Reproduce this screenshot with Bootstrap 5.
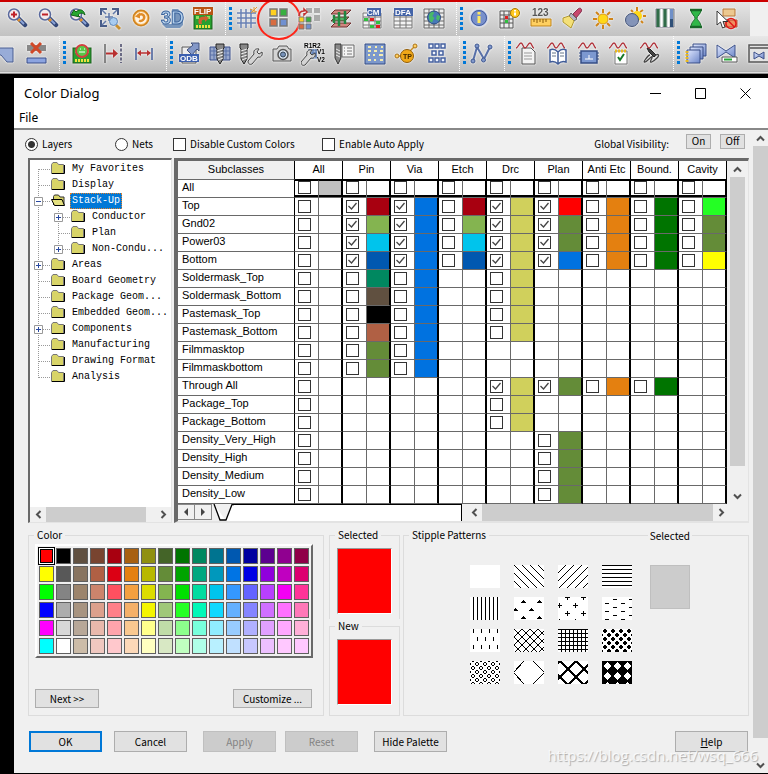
<!DOCTYPE html>
<html lang="en">
<head>
<meta charset="utf-8">
<meta name="viewport" content="width=device-width, initial-scale=1">
<title>Color Dialog</title>
<link rel="stylesheet" href="https://cdn.jsdelivr.net/npm/bootstrap@5.3.0/dist/css/bootstrap.min.css">
<style>
body{background:#000;color:#000;font:10px/16px "Noto Sans CJK SC","Liberation Sans",sans-serif}
button{font:inherit;color:inherit}
/* toolbars */
.tools{border-top:2px solid #c00;background:#f0f0f0;overflow:hidden}
.toolrow{height:34px;background:linear-gradient(#e6e6e6,#c2c2c2)}
.toolrow.first{margin-right:18px}
.toolrow.second{height:35px;background:linear-gradient(#e8e8e8,#bcbcbc)}
.toolrow.second>button:first-child{margin-left:-10px}
.toolrow.first>button:first-child{margin-left:1px}
.toolrow>button{flex:0 0 31px;height:30px;padding:0;border:0;background:none;display:grid;place-items:center}
.toolrow svg{width:24px;height:24px;filter:drop-shadow(0 0 1px #fff)}
.toolrow svg text{font-family:"Liberation Sans",sans-serif;font-weight:700}
.grip{flex:0 0 14px;height:100%;background:
 repeating-linear-gradient(#0078d7 0 3px,transparent 3px 5px) 11px 5px/3px 23px no-repeat,
 repeating-linear-gradient(#fff 0 1px,transparent 1px 2px) 7px 0/1px 100% no-repeat}
.toolbase{height:3px;background:linear-gradient(#999,#e0e0e0 50%,#666)}
.ring{position:absolute;left:-6px;top:-6px;width:44px;height:42px;border:2px solid #ff2418;border-radius:50%;pointer-events:none}
/* window */
.dlg{margin:4px 0 1px 14px;background:#f0f0f0}
.titlebar{background:#fff;height:31px;padding:0 17px 0 10px;font:13px/31px "Noto Sans",sans-serif}
.titlebar button{border:0;background:none;padding:0;line-height:0}
.winbtns{gap:34px}
.menubar{background:#fff;height:21px;padding-left:5px;border-bottom:2px solid #888;font:12px/18px "Noto Sans",sans-serif}
.menubar a{color:#000}
.opts input,.chk{appearance:none;flex:0 0 13px;width:13px;height:13px;border:1px solid #333;background:#fff;margin:0}
.opts input[type=radio]{border-radius:50%}
.opts input[type=radio]:checked{background:radial-gradient(#333 0 3px,#fff 4px)}
.chk:checked{background:#fff url("data:image/svg+xml,%3Csvg xmlns='http://www.w3.org/2000/svg' viewBox='0 0 11 11'%3E%3Cpath d='M1.500 5l3 3 5-6' fill='none' stroke='%23444' stroke-width='1.300'/%3E%3C/svg%3E")}
.o1{width:90px}.o2{width:58px}.o3{width:149px}
.push{border:1px solid #adadad;background:#e1e1e1;border-radius:0;padding:0;height:21px;line-height:18px;text-align:center}
.push:disabled{background:#ccc;border-color:#bfbfbf;color:#838383}
.push.main{border:2px solid #0078d7;line-height:16px}
.push.short{height:19px;line-height:16px}
.tiny{width:25px;height:15px;line-height:12px}
.w73{width:73px}.w64{width:64px}.w79{width:79px}
#pane{min-width:0;padding-left:14px}
.opts{height:28px;margin-left:-3px;padding-right:4px}
.vis1{margin:-6px 9px 0 17px}
.vis2{margin-top:-6px}
.panels{gap:2px}
/* scroll bars */
.sb{background:#f0f0f0;flex:none}
.sb button{flex:0 0 16px;display:grid;place-items:center;border:0;background:none;padding:0}
.sb svg{width:9px;height:9px;fill:none;stroke:#505050;stroke-width:2}
.thumb{background:#cdcdcd}
.upright{width:15px}
.inner{margin-left:3px}
.level{height:15px}
.twide{flex:0 0 100px}
.ttall{flex:0 0 289px}
.rest{height:19px}
/* tree */
.tree{width:144px;background:#fff;border:1px solid #696969;border-width:2px 1px 1px 2px;border-right-color:#e3e3e3;border-bottom-color:#e3e3e3;font:10px/16px "Liberation Mono",monospace}
.tree ul{padding-top:1px!important}
.tree li{height:16px}
.tree b{font-weight:400;margin-left:5px;padding:0 2px;white-space:nowrap}
.tree b.on{background:#0078d7;color:#fff;outline:1px dotted #e0802c;outline-offset:-1px}
.gut{flex:0 0 20px;height:16px;display:flex;padding:4px 0 0 4px;background:
 repeating-linear-gradient(#999 0 1px,transparent 1px 2px) 8px 0/1px 100% no-repeat,
 repeating-linear-gradient(90deg,#999 0 1px,transparent 1px 2px) 9px 8px/11px 1px no-repeat}
.gut.bar{background-size:1px 100%,0 0}
.gut.top1{background-position:8px 8px,9px 8px}
.gut.end{background-size:1px 9px,11px 1px}
.gut svg{width:9px;height:9px}
.fold{flex:0 0 14px;width:14px;height:12px;margin:1px 0 0 1px}
/* layer grid */
.gridbox{min-width:0;padding-right:3px;border-style:solid;border-width:3px 1px 2px 4px;border-color:#696969 #e3e3e3 #e3e3e3 #696969}
.lay{width:100%;table-layout:fixed;border-collapse:separate;border-spacing:0;background:#fff;font:11px/14px "Liberation Sans",sans-serif}
.lay th,.lay td{padding:0;overflow:hidden;font-weight:400;white-space:nowrap;border-bottom:1px solid #696969;height:18px;vertical-align:top}
.lay thead th{height:19px;text-align:center;border-right:1px solid #000;border-bottom-color:#000;line-height:17px}
.lay thead th:first-child{background:#f0f0f0;border-bottom-color:#696969}
.lay tbody th{padding-left:4px;border-right:1px solid #000}
.lay td.t{padding:2px 0 0 3px;border-right:1px solid #696969}
.lay td.c{border-right:2px solid #000}
.lay .chk{display:block}
.lay tr.every td{border-top:1px solid #000;box-shadow:inset 0 -2px #000}
.lay tr.every td.t{padding-top:0}
.name{width:117px}
.tabs{height:17px;background:#f0f0f0}
.tabs .step{flex:0 0 17px;height:16px;border:1px solid #888;border-width:1px 1px 1px 0;background:#f0f0f0;padding:0;line-height:0}
.sheet{flex:0 1 228px;background:#fff;border-top:1px solid #000;border-right:1px solid #000}
/* lower part */
.groups{margin-top:5px}
.grp{border:1px solid #dcdcdc;min-width:0}
.grp legend{float:none;width:auto;font-size:10px;line-height:14px;margin:0 0 0 5px;padding:0 3px}
.gcolor{flex:0 0 296px;margin:0 5px 0 0;padding:0 6px 7px}
.gcolor legend{margin-left:-1px}
.pal{border:2px solid;border-color:#fff #696969 #696969 #fff;padding:2px;display:grid;grid-template-columns:repeat(16,15px);gap:2px;width:278px;margin-top:2px}
.sw{width:15px;height:16px;border:1px solid #606060;padding:0}
.sw.cur{outline:1px solid #000;box-shadow:0 0 0 1px #000,inset 0 0 0 1px #000;border-color:#fff}
.acts{margin:31px 5px 0 0}
.gsel{flex:0 0 71px;margin-right:3px}
.big{height:66px;background:red;border:1px solid;border-color:#999 #fff #fff #999;margin:6px 7px 5px}
.gstip{padding-top:23px}
.stip{display:grid;grid-template-columns:repeat(4,30px);gap:9px 14px;margin-left:66px}
.stip button{height:23px;padding:0;border:0;background:#fff;line-height:0}
.stip svg{width:30px;height:23px;shape-rendering:crispEdges;fill:none;stroke:#000}
.none{width:40px;height:44px;border:1px solid #bfbfbf;background:#ccc;margin-left:18px}
.over{position:absolute;right:56px;top:-13px;padding:0 2px;background:#f0f0f0;line-height:14px}
.foot{margin:15px 0 0 1px}
.foot>:nth-child(2){margin-left:12px}
.foot>:nth-child(3){margin-left:16px}
.foot>:nth-child(4){margin-left:9px}
.foot>:nth-child(5){margin-left:16px}
.foot>:last-child{margin-right:1px}
.wm{position:absolute;right:10px;bottom:8px;font:15px/20px "Open Sans",sans-serif;color:#fffc;text-shadow:1px 1px 1px #aaa;pointer-events:none}
</style>
<script src="https://cdn.jsdelivr.net/npm/bootstrap@5.3.0/dist/js/bootstrap.bundle.min.js"></script>
</head>
<body class="d-flex flex-column min-vh-100 m-0">
<svg width="0" height="0" class="position-absolute" aria-hidden="true">
 <defs>
  <linearGradient id="blue" x2="1" y2="1"><stop stop-color="#e0e8ff"/><stop offset="1" stop-color="#6c86c8"/></linearGradient>
  <symbol id="fo" viewBox="0 0 14 12"><path d="M.5 11.500V2.500l1.500-2h4l1.500 2h5v9z" fill="#d8d468" stroke="#777"/><path d="M1 11.500h12.500V3" fill="none" stroke="#000"/></symbol>
  <symbol id="fopen" viewBox="0 0 14 12"><path d="M2.500 11V2.500l1-1.500h4l1.500 2h4v8" fill="#d8d468" stroke="#333"/><path d="M.5 5.500h10.500l2.500 6H3.500z" fill="#e4e080" stroke="#000"/></symbol>
  <symbol id="plus" viewBox="0 0 9 9"><path d="M.5.5h8v8h-8z" fill="#fff" stroke="#999"/><path d="M2 4.500h5M4.500 2v5" stroke="#2848a0"/></symbol>
  <symbol id="minus" viewBox="0 0 9 9"><path d="M.5.5h8v8h-8z" fill="#fff" stroke="#999"/><path d="M2 4.500h5" stroke="#2848a0"/></symbol>
  <symbol id="up" viewBox="0 0 9 9"><path d="M1 6.500l3.500-3.500L8 6.500"/></symbol>
  <symbol id="dn" viewBox="0 0 9 9"><path d="M1 2.500L4.500 6 8 2.500"/></symbol>
  <symbol id="lt" viewBox="0 0 9 9"><path d="M6.500 1L3 4.500 6.500 8"/></symbol>
  <symbol id="rt" viewBox="0 0 9 9"><path d="M2.500 1L6 4.500 2.500 8"/></symbol>
  <symbol id="lens" viewBox="0 0 24 24"><path d="M13 11l7 7" stroke="#344878" stroke-width="4.500" stroke-linecap="round"/><path d="M13 11l6 6" stroke="#8ca4d8" stroke-width="2"/><path d="M13 12l2 2" stroke="#e09030" stroke-width="3"/><circle cx="9" cy="7.500" r="5.500" fill="#f4e8ea" stroke="#58689c" stroke-width="1.500"/></symbol>
  <symbol id="board" viewBox="0 0 24 24"><rect x="3" y="6" width="18" height="15" fill="#28a030" stroke="#185c18"/><path d="M5 18.500h14" stroke="#f0e040" stroke-width="3" stroke-dasharray="2 1"/><path d="M5 8h3v3H5zM16 8h3v3h-3z" fill="#90e060"/></symbol>
  <symbol id="wave" viewBox="0 0 24 24"><path d="M1 7c2 0 3-5 5-5s2 5 4 5 3-5 5-5 2 5 4 5" fill="none" stroke="#b03038" stroke-width="1.300"/></symbol>
  <symbol id="wrench" viewBox="0 0 24 24"><path d="M12 21l6-7c3 1 5-2 4-5l-3 2-2-2 2-3c-4-1-6 2-5 5l-6 7c0 3 2 4 4 3z" fill="#d4d4d4" stroke="#444"/></symbol>
  <symbol id="sheet" viewBox="0 0 24 24"><path d="M3 6h18v15H3z" fill="#f4f4f4" stroke="#777"/><path d="M3 10h18M3 14h18M3 18h18M9 6v15M15 6v15" stroke="#777" fill="none"/></symbol>
  <symbol id="screw" viewBox="0 0 24 24"><path d="M8 2h8v4l-1 1v10l-3 5-3-5V7L8 6z" fill="#888" stroke="#222"/><path d="M9 9l6-2M9 12l6-2M9 15l6-2M10 18l5-2" stroke="#eee"/></symbol>
 </defs>
</svg>

<header class="tools">
 <div class="toolrow first d-flex align-items-center">
  <button aria-label="Zoom in"><svg viewBox="0 0 24 24"><use href="#lens"/><path d="M6 7.500h6M9 4.500v6" stroke="#c02028" stroke-width="2"/></svg></button>
  <button aria-label="Zoom out"><svg viewBox="0 0 24 24"><use href="#lens"/><path d="M6 7.500h6" stroke="#c02028" stroke-width="2"/></svg></button>
  <button aria-label="Zoom previous"><svg viewBox="0 0 24 24"><use href="#lens"/><path d="M4 8l3-5 2 2c4-4 8-2 9 3-3-3-5-2-7 0l2 2z" fill="#28a830" stroke="#106018"/></svg></button>
  <button aria-label="Zoom fit"><svg viewBox="0 0 24 24" fill="none"><path d="M3 8V2h6M14 2h6v6M9 19H3v-6" stroke="#485c88" stroke-width="2"/><path d="M4 3l4 4M19 3l-4 4M4 18l4-4M7 10h8M11 6v8" stroke="#6078a8" stroke-width="1.500"/><path d="M18 18l4 4" stroke="#c89030" stroke-width="3"/><circle cx="15.500" cy="14.500" r="4" fill="#a8ccf0" stroke="#6088b8"/></svg></button>
  <button aria-label="Redraw"><svg viewBox="0 0 24 24" fill="none"><circle cx="12" cy="11" r="7.500" fill="#fff4e4" stroke="#d08420" stroke-width="2"/><circle cx="12" cy="11" r="6.500" stroke="#f4b050"/><path d="M9 8.500c4-3 7 0 6 3-1 2-3 3-5 2" stroke="#e08c28" stroke-width="2.500"/><path d="M6 9.500l5-4v6z" fill="#e08c28"/></svg></button>
  <button aria-label="3D view"><svg viewBox="0 0 24 24"><path d="M12 2h6l5 5v11l-3 3H6l-4-4h12z" fill="#7896bc"/><text x="1" y="17" font-size="18" fill="#b4d0ec" stroke="#3c649c">3D</text></svg></button>
  <button aria-label="Flip"><svg viewBox="0 0 24 24"><use href="#board" y="1"/><path d="M8 17c-2-6 2-8 6-7l-1-2 5 3-4 4v-2c-3-1-4 1-3 4z" fill="#d06030"/><path d="M2 0h20v8H2z" fill="#b85414"/><text x="3" y="7" font-size="8" fill="#fff">FLIP</text></svg></button>
  <span class="grip"></span>
  <button aria-label="Grid"><svg viewBox="0 0 24 24" fill="none"><path d="M1 6h19M1 11h19M1 16h19M5 2v19M10 2v19M15 2v19" stroke="#6880b4" stroke-width="1.500"/><path d="M18 0v6M14 2l7 3M21 0l-6 6" stroke="#e09830"/></svg></button>
  <button aria-label="Color dialog" class="position-relative"><svg viewBox="0 0 24 24" stroke="#777" stroke-width="1.500"><path d="M3 2h7v7H3z" fill="#ffd020"/><path d="M13 2h7v7h-7z" fill="#38b040"/><path d="M3 12h7v7H3z" fill="#d86c40"/><path d="M13 12h7v7h-7z" fill="#7090d0"/></svg><span class="ring"></span></button>
  <button aria-label="Swap colors"><svg viewBox="0 0 24 24"><path d="M8 1h6v5H8zM16 1h6v5h-6zM16 8h6v6h-6z" fill="#aaa"/><g stroke="#777"><path d="M1 10h5v5H1z" fill="#ffd020"/><path d="M8 10h5v5H8z" fill="#38b040"/><path d="M1 17h5v5H1z" fill="#d86c40"/><path d="M8 17h5v5H8z" fill="#7090d0"/></g><path d="M1 9c0-4 3-5 5-5V2l3 3-3 3V6" fill="none" stroke="#c03030" stroke-width="1.500"/></svg></button>
  <button aria-label="Cross section"><svg viewBox="0 0 24 24"><g stroke="#6c2c2c"><path d="M2 20l4-4h16l-4 4z" fill="#d08880"/><path d="M2 14l4-4h14l-4 4z" fill="#58b068"/><path d="M2 7l4-4h16l-4 4z" fill="#d08880"/></g><path d="M5 8v8M10 5v14M16 4v13" stroke="#208840" stroke-width="2.500"/></svg></button>
  <button aria-label="Constraint manager"><svg viewBox="0 0 24 24"><use href="#sheet"/><path d="M4 11h4v3H4zM16 14h4v3h-4zM10 18h4v3h-4z" fill="#30c040"/><path d="M10 11h4v3h-4zM16 18h4v3h-4z" fill="#e02020"/><path d="M7 1h14v8H7z" fill="#4464a8"/><text x="7" y="8" font-size="8" fill="#fff">CM</text></svg></button>
  <button aria-label="DFA"><svg viewBox="0 0 24 24"><use href="#sheet"/><path d="M3 1h19v8H3z" fill="#4464a8"/><text x="4" y="8" font-size="8" fill="#fff">DFA</text></svg></button>
  <button aria-label="Web"><svg viewBox="0 0 24 24"><path d="M2 2h20v19H2z" fill="#eee" stroke="#666"/><path d="M2 6h20M2 10h20M2 14h20M2 18h20M7 2v19M12 2v19M17 2v19" stroke="#666"/><circle cx="12" cy="10.500" r="6.500" fill="#4878b8" stroke="#28487c"/><path d="M8 6c4-3 5 0 3 2s3 2 1 4-1 4-3 3-3-6-1-9zM15 8l3 1-1 5-3-2z" fill="#48b868"/></svg></button>
  <span class="grip"></span>
  <button aria-label="Info"><svg viewBox="0 0 24 24"><circle cx="12" cy="11" r="8.500" fill="#7890cc" stroke="#ccd4ec"/><circle cx="12" cy="11" r="7.500" fill="none" stroke="#445c9c"/><path d="M12 5v2.500M12 9v7" stroke="#ffe860" stroke-width="3"/></svg></button>
  <button aria-label="Report"><svg viewBox="0 0 24 24"><path d="M2 4h13v17H2z" fill="#eee" stroke="#555"/><path d="M2 8h13M2 12h13M2 16h13M6 4v17M11 4v17" stroke="#555"/><path d="M7 13h3v3H7z" fill="#30c040"/><path d="M7 9h3v3H7z" fill="#e02020"/><circle cx="17" cy="6" r="4.500" fill="#ffc820" stroke="#a87800"/><path d="M17 3v1.500M17 5.500v3" stroke="#fff" stroke-width="2"/></svg></button>
  <button aria-label="Measure"><svg viewBox="0 0 24 24"><text x="3" y="9" font-size="10" fill="#555">123</text><path d="M2 12h20v7H2z" fill="#ffd060" stroke="#c08418"/><path d="M5 12v3M8 12v4M11 12v3M14 12v4M17 12v3" stroke="#885808"/></svg></button>
  <button aria-label="Highlight"><svg viewBox="0 0 24 24"><path d="M13 7l5-5c2-2 5 0 3 3l-5 6z" fill="#c8486c" stroke="#84304c"/><path d="M11 6l6 6-3 2-5-5z" fill="#b4b4c0" stroke="#666"/><path d="M3 11l6-2 5 5-3 7-8-6z" fill="#f4e078" stroke="#b09830"/></svg></button>
  <button aria-label="Show all"><svg viewBox="0 0 24 24"><path d="M12 2v4M12 18v4M2 12h4M18 12h4M5 5l3 3M16 16l3 3M19 5l-3 3M8 16l-3 3" stroke="#d08418" stroke-width="2"/><circle cx="12" cy="12" r="5" fill="#ffd818" stroke="#d89818"/></svg></button>
  <button aria-label="Shadow"><svg viewBox="0 0 24 24"><path d="M15 0v4M21 9h3M9 3l2 2M21 3l-3 2M19 14l2 2" stroke="#d08418" stroke-width="2"/><circle cx="15" cy="9" r="5" fill="#ffd818"/><circle cx="10" cy="13" r="6.500" fill="#8494b8" stroke="#445478"/></svg></button>
  <button aria-label="Layers"><svg viewBox="0 0 24 24"><path d="M3 2h18v18H3z" fill="#b8c8c0" stroke="#778"/><path d="M5 2v18M12 2v18" stroke="#306c48" stroke-width="3"/><path d="M8.500 2v18M15.500 2v18" stroke="#fff" stroke-width="2"/><path d="M17 2h3v10h-3z" fill="#7090c8"/><path d="M17 12h3v8h-3z" fill="#305078"/></svg></button>
  <button aria-label="Wait"><svg viewBox="0 0 24 24"><path d="M7 3h10c0 4-4 6-4 8s4 4 4 9H7c0-5 4-7 4-9s-4-4-4-8z" fill="#30b848" stroke="#186828"/><path d="M6 3h12M6 20h12" stroke="#186828" stroke-width="2.500"/></svg></button>
  <button aria-label="No select"><svg viewBox="0 0 24 24"><path d="M8 2h12v7H8z" fill="#ecc890" stroke="#b87838"/><path d="M10 13h12v7H10z" fill="#f09060" stroke="#b85030"/><circle cx="16" cy="16.500" r="5" fill="none" stroke="#e01818" stroke-width="1.500"/><path d="M12.500 13l7 7" stroke="#e01818" stroke-width="1.500"/><path d="M2 4v14l3.500-3 2 6 2.500-1-2-5.500h5z" fill="#fff" stroke="#333"/></svg></button>
 </div>
 <div class="toolrow second d-flex align-items-center">
  <button aria-label="Shape"><svg viewBox="0 0 24 24"><path d="M3 6h16v14H13L7 13H3z" fill="#98acd8" stroke="#485c90"/></svg></button>
  <button aria-label="Delete"><svg viewBox="0 0 24 24"><path d="M2 3h19v6H2z" fill="#888"/><path d="M2 16h19v5H2z" fill="#8ca4e0" stroke="#384c88"/><path d="M6 1l10 10M16 1L6 11" stroke="#d04828" stroke-width="3"/></svg></button>
  <span class="grip"></span>
  <button aria-label="Board check"><svg viewBox="0 0 24 24"><use href="#board"/><circle cx="12" cy="9" r="6" fill="#58c848" stroke="#d04040" stroke-width="2"/><path d="M9 10h6M10 7h1M14 7h1" stroke="#fff"/></svg></button>
  <button aria-label="Extend"><svg viewBox="0 0 24 24" fill="none"><path d="M4 2v19" stroke="#666" stroke-width="1.500"/><path d="M20 2v19" stroke="#446" stroke-width="1.500" stroke-dasharray="3 1.500"/><path d="M5 11.500h8" stroke="#b83030" stroke-width="2"/><path d="M12 7l5 4.500-5 4.500z" fill="#b83030"/></svg></button>
  <button aria-label="Distance"><svg viewBox="0 0 24 24"><path d="M4 6v12M20 6v12" stroke="#445c98" stroke-width="1.500"/><path d="M6 11h12" stroke="#b83030" stroke-width="1.500"/><path d="M5 11l4-3v6zM19 11l-4-3v6z" fill="#b83030"/></svg></button>
  <span class="grip"></span>
  <button aria-label="ODB export"><svg viewBox="0 0 24 24"><path d="M5 5h14v16H5z" fill="#eee" stroke="#555"/><path d="M10 8l6-5-2-2h8v8l-2-2-5 6z" fill="#8498c8" stroke="#40507c"/><path d="M2 12h20v8H2z" fill="#3c60b0"/><text x="3" y="19" font-size="8" fill="#fff">ODB</text></svg></button>
  <button aria-label="Drill"><svg viewBox="0 0 24 24"><path d="M2 5h20v13H2z" fill="#98a8cc" stroke="#384c88"/><path d="M2 9h20M2 13h20M6 5v13M18 5v13" stroke="#5870a8"/><use href="#screw"/></svg></button>
  <button aria-label="Drill setup"><svg viewBox="0 0 24 24"><use href="#screw" x="-7"/><use href="#wrench" x="1" y="1"/></svg></button>
  <button aria-label="Snapshot"><svg viewBox="0 0 24 24"><path d="M3 7h4l2-3h8l2 3h2v12H3z" fill="#d4d4d4" stroke="#555"/><circle cx="13" cy="12.500" r="5" fill="#dce8f4" stroke="#555" stroke-width="1.500"/><circle cx="13" cy="12.500" r="2.500" fill="#7490b8" stroke="#345"/></svg></button>
  <button aria-label="Rename"><svg viewBox="0 0 24 24"><path d="M7 8h9v9H7z" fill="#a8bcdc"/><path d="M7 8h9M7 11h9M7 14h9M9 7v9M12 7v9M15 7v9" stroke="#5070a8"/><use href="#wrench" x="-8" y="2"/><g font-size="6.500" fill="#000"><text x="3" y="5.500">R1R2</text><text x="16" y="12">V1</text><text x="16" y="20">V2</text></g></svg></button>
  <button aria-label="Drill legend"><svg viewBox="0 0 24 24"><path d="M10 3h12v12H10z" fill="#f4f4f4" stroke="#666"/><path d="M12 6h1M15 6h5M12 9h1M15 9h5M12 12h1M15 12h5" stroke="#777"/><path d="M3 2h6v14l-3 6-3-6z" fill="#888" stroke="#333"/><path d="M4 7l4 2M4 10l4 2M4 13l4 2" stroke="#eee"/></svg></button>
  <button aria-label="Pad pattern"><svg viewBox="0 0 24 24"><path d="M2 2h20v20H2z" fill="#7c98cc" stroke="#344c84"/><path d="M5 5h3M12 5h2M18 5h2M5 9h3M11 9h3M17 9h3M5 13h2M10 13h2M16 13h4M5 18h3M11 18h2M17 18h3" stroke="#f4ecb0" stroke-width="2"/></svg></button>
  <button aria-label="Test point"><svg viewBox="0 0 24 24"><path d="M3 14h8l9-9" fill="none" stroke="#c89028" stroke-width="1.500"/><circle cx="3" cy="14" r="2" fill="#ffd060" stroke="#a87018"/><circle cx="21" cy="4" r="2" fill="#ffd060" stroke="#a87018"/><circle cx="13" cy="14" r="6.500" fill="#f0a818" stroke="#905c08"/><text x="9" y="17" font-size="7" fill="#402800">TP</text></svg></button>
  <button aria-label="Array"><svg viewBox="0 0 24 24"><path d="M4 2h4v4H4zM10 2h4v4h-4zM16 2h4v4h-4zM7 9h4v4H7zM14 9h4v4h-4zM4 16h4v4H4zM10 16h4v4h-4zM16 16h4v4h-4z" fill="#f0f4fc" stroke="#4460a0" stroke-width="1.500"/></svg></button>
  <span class="grip"></span>
  <button aria-label="Ratsnest"><svg viewBox="0 0 24 24"><path d="M3 19L7 5l7 12 6-12" fill="none" stroke="#5870a8" stroke-width="2"/><g fill="#8098cc" stroke="#405890"><circle cx="3" cy="19" r="2"/><circle cx="7" cy="4" r="2"/><circle cx="13.500" cy="18" r="2"/><circle cx="20" cy="5" r="2"/></g></svg></button>
  <span class="grip"></span>
  <button aria-label="Signal sheet"><svg viewBox="0 0 24 24"><path d="M7 6h9l4 4v12H7z" fill="#f4f4f4" stroke="#555"/><path d="M9 11h8M9 14h8M9 17h8" stroke="#999"/><use href="#wave" y="-1"/></svg></button>
  <button aria-label="Signal library"><svg viewBox="0 0 24 24"><path d="M12 10c-3-3-6-3-8-2v12c3-1 6 0 8 2 2-2 5-3 8-2V8c-2-1-5-1-8 2zv12" fill="#fff" stroke="#405c98" stroke-width="1.500"/><path d="M6 11h4M6 14h4M14 11h4M14 14h4" stroke="#678"/><use href="#wave" y="-1"/></svg></button>
  <button aria-label="Signal model"><svg viewBox="0 0 24 24"><path d="M4 9h16v12H4z" fill="#7c98d0" stroke="#344c84" stroke-width="1.500"/><path d="M2 11h2M2 14h2M2 17h2M20 11h2M20 14h2M20 17h2" stroke="#344c84"/><path d="M8 17h8M12 13v4" stroke="#fff"/><use href="#wave" y="-1"/></svg></button>
  <button aria-label="Signal audit"><svg viewBox="0 0 24 24"><path d="M7 9h12v13H7z" fill="#fff" stroke="#777"/><path d="M7 9h12" stroke="#e8b820" stroke-width="3" stroke-dasharray="2 1"/><path d="M10 15l2 3 4-6" fill="none" stroke="#187828" stroke-width="2"/><use href="#wave" y="-1"/></svg></button>
  <button aria-label="Signal probe"><svg viewBox="0 0 24 24"><path d="M8 6l3 1 6 6-2 2-5-5z" fill="#444" stroke="#222"/><path d="M16 14c3-3 5-1 2 2-4 4-8 6-6 2s2-5-2-1-6 4-4 1 4-5 5-5" fill="none" stroke="#444" stroke-width="1.300"/><use href="#wave" y="-1"/></svg></button>
  <span class="grip"></span>
  <button aria-label="Copy pages"><svg viewBox="0 0 24 24"><g fill="url(#blue)" stroke="#384c84"><path d="M9 2h13v12H9z"/><path d="M6 5h13v12H6z"/><path d="M3 8h13v13H3z"/></g><path d="M3 9v12" stroke="#e8b820" stroke-width="3" stroke-dasharray="2 1"/></svg></button>
  <button aria-label="Bow tie"><svg viewBox="0 0 24 24"><path d="M2 3l9 6 9-6v13l-9-6-9 6z" fill="url(#blue)" stroke="#3c5088"/><path d="M7 15h15v5H7z" fill="#fff" stroke="#555"/><path d="M9 17.500h8" stroke="#28a838" stroke-width="2"/></svg></button>
  <button aria-label="Bow tie window"><svg viewBox="0 0 24 24"><path d="M3 3h20v17H3z" fill="#e4e4e4" stroke="#555" stroke-width="1.500"/><path d="M3 6h20" stroke="#777" stroke-width="2"/><path d="M8 10l5 3 5-3v7l-5-3-5 3z" fill="url(#blue)" stroke="#3c5088"/></svg></button>
 </div>
 <div class="toolbase"></div>
</header>

<main class="dlg flex-grow-1 d-flex flex-column position-relative">
 <div class="titlebar d-flex align-items-center">
  <span class="me-auto">Color Dialog</span>
  <div class="winbtns d-flex align-items-center">
   <button aria-label="Minimize"><svg width="11" height="11"><path d="M0 5.500h11" stroke="#000"/></svg></button>
   <button aria-label="Maximize"><svg width="11" height="11"><path d="M.5.500h10v10H.5z" fill="none" stroke="#000"/></svg></button>
   <button aria-label="Close"><svg width="11" height="11"><path d="M.5.5l10 10M10.500.5l-10 10" stroke="#000"/></svg></button>
  </div>
 </div>
 <nav class="menubar"><a href="#" class="text-decoration-none">File</a></nav>
 <div class="d-flex flex-grow-1">
  <div class="flex-grow-1 pe-1" id="pane">
   <div class="opts d-flex align-items-center">
    <label class="d-flex align-items-center gap-1 o1"><input type="radio" name="mode" checked>Layers</label>
    <label class="d-flex align-items-center gap-1 o2"><input type="radio" name="mode">Nets</label>
    <label class="d-flex align-items-center gap-1 o3"><input type="checkbox">Disable Custom Colors</label>
    <label class="d-flex align-items-center gap-1 me-auto"><input type="checkbox">Enable Auto Apply</label>
    <span>Global Visibility:</span>
    <button class="push tiny vis1">On</button>
    <button class="push tiny vis2">Off</button>
   </div>
   <div class="d-flex panels">
    <div class="tree d-flex flex-column flex-shrink-0">
     <ul class="list-unstyled mb-auto" id="tree"></ul>
     <div class="sb level d-flex">
      <button aria-label="Scroll left"><svg><use href="#lt"/></svg></button><div class="thumb twide"></div><div class="flex-grow-1"></div><button aria-label="Scroll right"><svg><use href="#rt"/></svg></button>
     </div>
    </div>
    <div class="gridbox flex-grow-1">
     <div class="d-flex">
      <div class="flex-grow-1 bg-white overflow-hidden">
       <table class="lay"><thead><tr id="heads"></tr></thead><tbody id="rows"></tbody></table>
      </div>
      <div class="sb upright inner d-flex flex-column">
       <button aria-label="Scroll up"><svg><use href="#up"/></svg></button><div class="thumb ttall"></div><div class="flex-grow-1"></div><button aria-label="Scroll down"><svg><use href="#dn"/></svg></button>
      </div>
     </div>
     <div class="tabs d-flex">
      <button class="step" aria-label="Previous sheet"><svg width="6" height="8"><path d="M5 0L1 4l4 4z" fill="#444"/></svg></button>
      <button class="step" aria-label="Next sheet"><svg width="6" height="8"><path d="M1 0l4 4-4 4z" fill="#444"/></svg></button>
      <svg width="22" height="17" class="flex-shrink-0"><path d="M2 0l6 16h6l6-16h2v17H14z" fill="#fff"/><path d="M2 0l6 16h6L20 .5h2" fill="none" stroke="#000" stroke-width="1.300"/></svg>
      <div class="sheet"></div>
      <div class="sb d-flex flex-grow-1 ms-1 me-3">
       <button aria-label="Scroll left"><svg><use href="#lt"/></svg></button><div class="thumb flex-grow-1"></div><button aria-label="Scroll right"><svg><use href="#rt"/></svg></button>
      </div>
     </div>
    </div>
   </div>
   <div class="d-flex groups">
    <fieldset class="grp gcolor"><legend>Color</legend>
     <div class="pal" id="pal"></div>
     <div class="d-flex justify-content-between acts"><button class="push short w64">Next &gt;&gt;</button><button class="push short w79">Customize ...</button></div>
    </fieldset>
    <div class="gsel d-flex flex-column">
     <fieldset class="grp border-bottom-0"><legend>Selected</legend><div class="big"></div></fieldset>
     <fieldset class="grp flex-grow-1"><legend>New</legend><div class="big"></div></fieldset>
    </div>
    <fieldset class="grp flex-grow-1 position-relative"><legend>Stipple Patterns</legend>
     <span class="over">Selected</span>
     <div class="d-flex gstip"><div class="stip" id="stip"></div><div class="none"></div></div>
    </fieldset>
   </div>
   <div class="d-flex foot">
    <button class="push main w73">OK</button>
    <button class="push w73">Cancel</button>
    <button class="push w73" disabled>Apply</button>
    <button class="push w73" disabled>Reset</button>
    <button class="push w73">Hide Palette</button>
    <button class="push w73 ms-auto"><u>H</u>elp</button>
   </div>
  </div>
  <div class="sb upright d-flex flex-column">
   <button aria-label="Scroll up"><svg><use href="#up"/></svg></button><div class="thumb flex-grow-1"></div><div class="rest"></div><button aria-label="Scroll down"><svg><use href="#dn"/></svg></button>
  </div>
 </div>
 <div class="wm">https://blog.csdn.net/wsq_666</div>
</main>
<script>
// tree: [label, level, marker]
const tree=[['My Favorites',0],['Display',0],['Stack-Up',0,'minus'],['Conductor',1,'plus'],['Plan',1],['Non-Condu...',1,'plus'],['Areas',0,'plus'],['Board Geometry',0],['Package Geom...',0],['Embedded Geom...',0],['Components',0,'plus'],['Manufacturing',0],['Drawing Format',0],['Analysis',0]];
document.getElementById('tree').innerHTML=tree.map(([t,l,m],i)=>{
  const edge=i===0?' top1':(i===tree.length-1||t.startsWith('Non'))?' end':'';
  const open=m==='minus';
  return `<li class="d-flex">${l?'<span class="gut bar"></span>':''}<span class="gut${edge}">${m?`<svg><use href="#${m}"/></svg>`:''}</span><svg class="fold"><use href="#${open?'fopen':'fo'}"/></svg><b class="${open?'on':''}">${t}</b></li>`;
}).join('');

// layer grid: each cell is "x" (ticked) or "o" (clear) plus a colour, "-" is empty
const cols=['All','Pin','Via','Etch','Drc','Plan','Anti Etc','Bound.','Cavity'];
const D='#d0d05c',G='#648c38',B='#0072e0',O='#e48010',N='#007400';
const rows={
 'All':['o#c0c0c0','o','o','o','o','o','o','o','o'],
 'Top':['o','x#a80010','x'+B,'o#a80010','x'+D,'x#ff0000','o'+O,'o'+N,'o#24ff24'],
 'Gnd02':['o','x#84b450','x'+B,'o#84b450','x'+D,'x'+G,'o'+O,'o'+N,'o'+G],
 'Power03':['o','x#00c4ec','x'+B,'o#00c4ec','x'+D,'x'+G,'o'+O,'o'+N,'o'+G],
 'Bottom':['o','x#0058b0','x'+B,'o#0058b0','x'+D,'x'+B,'o'+O,'o'+N,'o#ffff00'],
 'Soldermask_Top':['o','o#008860','o'+B,'-','o'+D],
 'Soldermask_Bottom':['o','o#605040','o'+B,'-','o'+D],
 'Pastemask_Top':['o','o#000000','o'+B,'-','o'+D],
 'Pastemask_Bottom':['o','o#b06044','o'+B,'-','o'+D],
 'Filmmasktop':['o','o'+G,'o'+B],
 'Filmmaskbottom':['o','o'+G,'o'+B],
 'Through All':['o','-','-','-','x'+D,'x'+G,'o'+O,'o'+N],
 'Package_Top':['o','-','-','-','o'+D],
 'Package_Bottom':['o','-','-','-','o'+D],
 'Density_Very_High':['o','-','-','-','-','o'+G],
 'Density_High':['o','-','-','-','-','o'+G],
 'Density_Medium':['o','-','-','-','-','o'+G],
 'Density_Low':['o','-','-','-','-','o'+G]};
document.getElementById('heads').innerHTML='<th class="name">Subclasses</th>'+cols.map(c=>`<th colspan="2">${c}</th>`).join('');
document.getElementById('rows').innerHTML=Object.entries(rows).map(([n,c])=>`<tr class="${n==='All'?'every':''}"><th>${n}</th>${cols.map((h,i)=>{
  const v=c[i]||'-',f=v.slice(1);
  return `<td class="t">${v==='-'?'':`<input type="checkbox" class="chk" aria-label="${n} ${h}"${v[0]==='x'?' checked':''}>`}</td><td class="c"${f?` style="background:${f}"`:''}></td>`;
}).join('')}</tr>`).join('');

// palette, one string per row
const pal=[
'ff0000 000000 605040 784430 a80010 a86010 909010 446428 007400 008860 007490 0058b0 0000a0 5c0090 900090 900048',
'ffff00 585858 887460 b06044 dc0014 e48010 b8b800 648c38 00a400 00a880 0098bc 0074e4 0000e4 9000dc c000c0 dc0070',
'00ff00 848484 9c846c cc846c ff5060 f4a040 dcdc00 84b450 00e000 00dca0 00c4ec 3498ff 6464ff b840ff f400f4 ff3498',
'0000ff acacac a89480 dca08c ff8088 f4b068 f4f400 a0c878 24ff24 00f8b8 10d8ff 64b0ff 8484ff d070ff ff70ff ff78b8',
'ff00ff d8d8d8 b8a898 e8b8ac ffa4ac f8c890 ffff8c c0dca8 8cff8c 78ffdc 90ecff 98ccff b0b0ff e0a0ff ffa8ff ffb0d8',
'00ffff ffffff ccbca8 f0c8c0 ffc8cc fcd8b8 ffffc0 d8e8c4 c0ffc0 b0ffe8 b8f0ff c0e0ff c8c8ff ecc0ff ffc8ff ffc8ff'];
document.getElementById('pal').innerHTML=pal.join(' ').split(' ').map((c,i)=>`<button class="sw${i?'':' cur'}" aria-label="#${c}" style="background:#${c}"></button>`).join('');

// stipple tiles: [tile width, tile height, markup]
const st=[
 [8,8,''],
 [8,8,'<path d="M-1-1l10 10M-1 7l2 2M7-1l2 2"/>'],
 [8,8,'<path d="M-1 9L9-1M-1 1l2-2M7 9l2-2"/>'],
 [4,4,'<path d="M0 .5h4"/>'],
 [4,4,'<path d="M3.500 0v4"/>'],
 [16,16,'<path d="M7 5.500h5M8 4.500h3M9 3.500h1M-1 13.500h5M0 12.500h3M1 11.500h1M15 13.500h1"/>'],
 [16,16,'<path d="M7 .5h5M9.500 0v3M9.500 14v2M0 8.500h4M1.500 6v5M15 8.500h1"/>'],
 [16,8,'<path d="M11 2.500h4M3 6.500h4"/>'],
 [8,16,'<path d="M3.500 0v4M7.500 8v4"/>'],
 [8,8,'<path d="M-1-1l10 10M-1 9L9-1"/>'],
 [4,4,'<path d="M0 .5h4M3.500 0v4"/>'],
 [8,8,'<path d="M2 0h2v1H2zM1 1h4v2H1zM2 3h2v1H2zM6 4h2v1H6zM5 5h3v2H5zM0 5h1v2H0zM6 7h2v1H6z" fill="#000" stroke="none"/>'],
 [8,8,'<path d="M6 1h2v1H6zM5 2h1v2H5zM8 2h1v2H8zM6 4h2v1H6zM2 5h2v1H2zM1 6h1v2H1zM4 6h1v2H4zM2 0h2v1H2zM0 2h1v2H0z" fill="#000" stroke="none"/>'],
 [30,23,'<path d="M10 0L0 11M19 0l11 11M0 12l10 11M30 12L19 23"/>'],
 [16,16,'<path d="M1-1l16 16M-1 13l4 4M19-1L1 17M3-1l-4 4" stroke-width="1.700"/>'],
 [10,10,'<path d="M0 0h10v10H0zM5 1L1 5l4 4 4-4z" fill="#000" fill-rule="evenodd" stroke="none"/>']];
document.getElementById('stip').innerHTML=st.map(([w,h,m],i)=>`<button aria-label="Pattern ${i+1}"><svg><defs><pattern id="p${i}" width="${w}" height="${h}" patternUnits="userSpaceOnUse">${m}</pattern></defs><rect width="30" height="23" fill="url(#p${i})" stroke="none"/></svg></button>`).join('');
</script>
</body>
</html>
